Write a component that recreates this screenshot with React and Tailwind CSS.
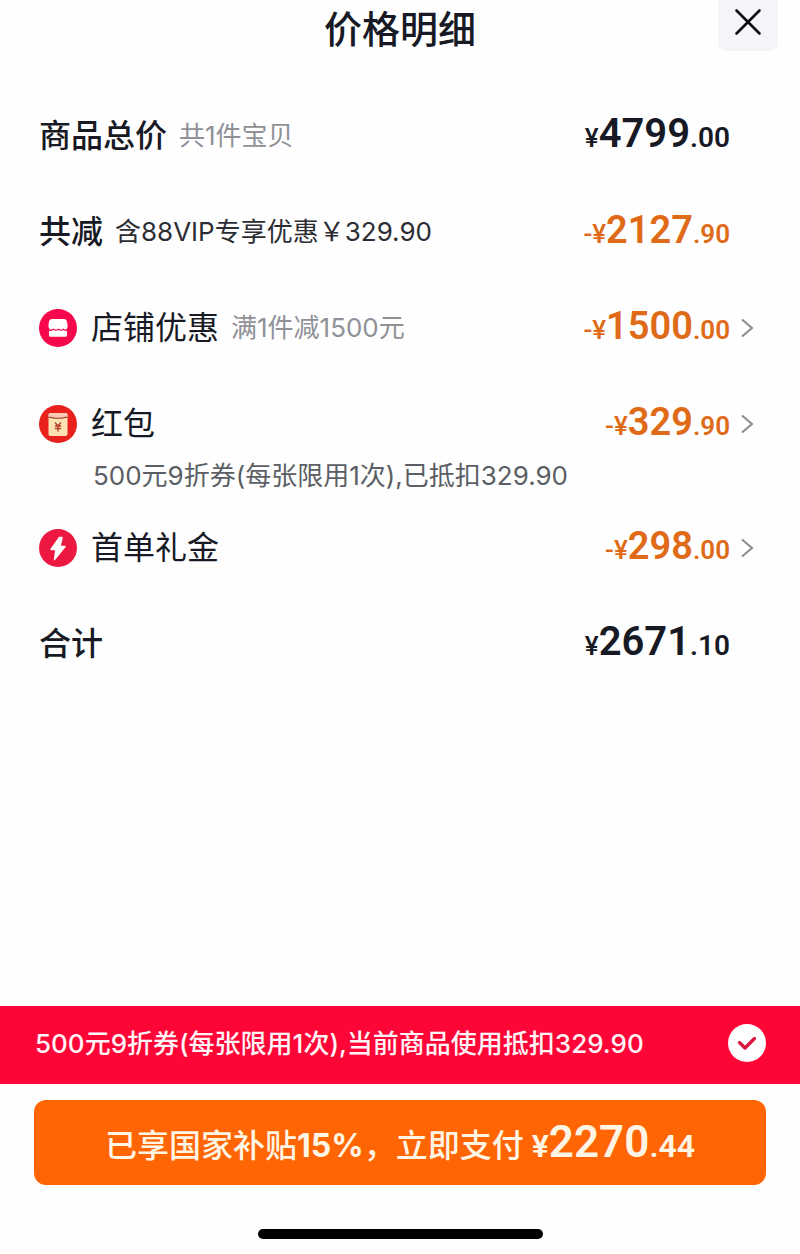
import React, { useState } from "react";

const StoreIcon = () => (
  <svg className="h-[38px] w-[38px]" viewBox="0 0 38 38" aria-hidden="true">
    <circle cx="19" cy="19" r="19" fill="#f5094c" />
    <path
      fill="#fff"
      d="M13 10h12q2.200 0 2.800 2l.7 3.500q.7 3.500-1 4.700-1.500.9-3.200-.6-2.400 2.200-4.900 0-2.500 2.200-4.900 0-1.700 1.500-3.500.6-1.900-1-1.500-4.700l.7-3.500Q10.800 10 13 10Z"
    />
    <path
      fill="#fff"
      d="M10 21.800q2.300.4 4.400-.9 2.300 1.600 4.800 0 2.600 1.600 5 0 1.700 1.300 3.800.9v4.400q0 1.600-1.600 1.600H11.600Q10 27.800 10 26.200Z"
    />
  </svg>
);

const RedPacketIcon = () => (
  <svg className="h-[38px] w-[38px]" viewBox="0 0 38 38" aria-hidden="true">
    <circle cx="19" cy="19" r="19" fill="#e9211d" />
    <rect x="9.500" y="8" width="19" height="23" rx="2" fill="#fde3b4" />
    <path d="M11.500 8h15q2 0 2 2v2q-9.500 2.500-19 0v-2q0-2 2-2Z" fill="#fbc9b5" />
    <path d="M9.500 12q9.500 2.500 19 0" fill="none" stroke="#8e2a17" strokeWidth="1.100" />
    <path
      d="m16 17.500 3 3.500 3-3.500M15.800 21h6.400M15.800 23.500h6.400M19 21v5.500"
      fill="none"
      stroke="#b5402c"
      strokeWidth="1.400"
    />
  </svg>
);

const BoltIcon = () => (
  <svg className="h-[38px] w-[38px]" viewBox="0 0 38 38" aria-hidden="true">
    <circle cx="19" cy="19" r="19" fill="#ed1841" />
    <path
      d="M20.500 8.500 12 20.500h5L15.500 30.500 26 17.500h-5l2-9Z"
      fill="#fff"
      stroke="#fff"
      strokeWidth="1.500"
      strokeLinejoin="round"
    />
  </svg>
);

const ChevronIcon = () => (
  <svg
    className="h-5 w-4"
    viewBox="0 0 16 20"
    fill="none"
    stroke="#8b8b8f"
    strokeWidth="2"
    aria-hidden="true"
  >
    <path d="m2 1.500 10 8.500-10 8.500" />
  </svg>
);

const items = [
  { title: "商品总价", note: "共1件宝贝", price: "4799", cents: "00", bold: true },
  {
    title: "共减",
    note: "含88VIP专享优惠￥329.90",
    darkNote: true,
    price: "2127",
    cents: "90",
    bold: true,
    discount: true,
  },
  {
    title: "店铺优惠",
    note: "满1件减1500元",
    icon: StoreIcon,
    price: "1500",
    cents: "00",
    discount: true,
    link: true,
  },
  {
    title: "红包",
    icon: RedPacketIcon,
    price: "329",
    cents: "90",
    discount: true,
    link: true,
    detail: "500元9折券(每张限用1次),已抵扣329.90",
  },
  {
    title: "首单礼金",
    icon: BoltIcon,
    price: "298",
    cents: "00",
    discount: true,
    link: true,
  },
  { title: "合计", price: "2671", cents: "10", bold: true },
];

const Price = ({ price, cents, discount }) => (
  <span
    className={`ml-auto font-[Roboto,sans-serif] font-semibold ${
      discount ? "text-[26px] text-[#df6a17]" : "text-[28px] text-[#171a24]"
    }`}
  >
    <span className="text-[26px] font-medium">{discount && "-"}¥</span>
    <span className={discount ? "text-[38px]" : "text-[40px]"}>{price}</span>.{cents}
  </span>
);

const PriceRow = ({ item }) => {
  const Icon = item.icon;
  const Row = item.link ? "button" : "div";

  return (
    <li className={item.detail ? "pb-[38px]" : "pb-14"}>
      <Row className="flex h-10 w-full items-center text-left leading-10 whitespace-nowrap">
        {Icon && (
          <span className="mr-3.5">
            <Icon />
          </span>
        )}
        <span className={`text-[32px] ${item.bold ? "font-medium" : "font-normal"}`}>
          {item.title}
        </span>
        {item.note && (
          <span
            className={`ml-3 text-[26px] ${
              item.darkNote ? "text-[#2b2d33]" : "text-[#8f9196]"
            }`}
          >
            {item.note}
          </span>
        )}
        <Price price={item.price} cents={item.cents} discount={item.discount} />
        <span className="w-10 pl-2.5">{item.link && <ChevronIcon />}</span>
      </Row>
      {item.detail && (
        <p className="mt-[18px] pl-[54px] text-[26px] leading-7 text-[#5b5e64]">{item.detail}</p>
      )}
    </li>
  );
};

const App = () => {
  const [useCoupon, setUseCoupon] = useState(true);

  return (
    <div className="flex min-h-screen flex-col bg-[#fefefe] font-[Inter,'Noto_Sans_CJK_SC',sans-serif] text-[#171a24]">
      <header className="grid grid-cols-[1fr_auto_1fr] items-start">
        <h1 className="col-start-2 pt-1 text-[38px] leading-[50px] font-medium">价格明细</h1>
        <button
          aria-label="关闭"
          className="mr-[22px] flex h-[51px] w-[60px] justify-center justify-self-end rounded-b-lg bg-[#f3f5f9] pt-2"
        >
          <svg
            className="h-7 w-7"
            viewBox="0 0 28 28"
            fill="none"
            stroke="#0b0b0f"
            strokeWidth="2.600"
            strokeLinecap="round"
            aria-hidden="true"
          >
            <path d="M2.500 2.500l23 23M25.500 2.500l-23 23" />
          </svg>
        </button>
      </header>

      <main className="flex-1 pt-[62px] pr-[30px] pl-[39px]">
        <ul>
          {items.map((item) => (
            <PriceRow key={item.title} item={item} />
          ))}
        </ul>
      </main>

      <footer>
        <label className="flex h-[78px] items-center justify-between bg-[#fe0538] pr-[34px] pb-1 pl-[35px] text-[26px] font-medium whitespace-nowrap text-[#fff3f5]">
          500元9折券(每张限用1次),当前商品使用抵扣329.90
          <span className="grid place-items-center">
            <input
              type="checkbox"
              checked={useCoupon}
              onChange={(e) => setUseCoupon(e.target.checked)}
              className="col-start-1 row-start-1 h-[38px] w-[38px] appearance-none rounded-full bg-white"
            />
            {useCoupon && (
              <svg
                className="pointer-events-none col-start-1 row-start-1 h-5 w-5"
                viewBox="0 0 20 20"
                fill="none"
                stroke="#d9143f"
                strokeWidth="3.200"
                strokeLinecap="round"
                strokeLinejoin="round"
                aria-hidden="true"
              >
                <path d="m2.500 9.500 5.500 5.500 9.500-9.500" />
              </svg>
            )}
          </span>
        </label>

        <div className="px-[34px] pt-4">
          <button className="flex h-[85px] w-full items-baseline justify-center rounded-xl bg-[#ff6503] text-[32px] leading-[85px] font-medium whitespace-nowrap text-[#fff5e4]">
            <span>
              已享国家补贴<span className="font-bold">15%</span>，立即支付
            </span>
            <span className="ml-2 font-[Roboto,sans-serif] font-semibold">
              ¥<span className="text-[44px]">2270</span>.44
            </span>
          </button>
        </div>

        <div className="mx-auto mt-11 mb-[15px] h-2.5 w-[285px] rounded-full bg-black" />
      </footer>
    </div>
  );
};

export default App;
